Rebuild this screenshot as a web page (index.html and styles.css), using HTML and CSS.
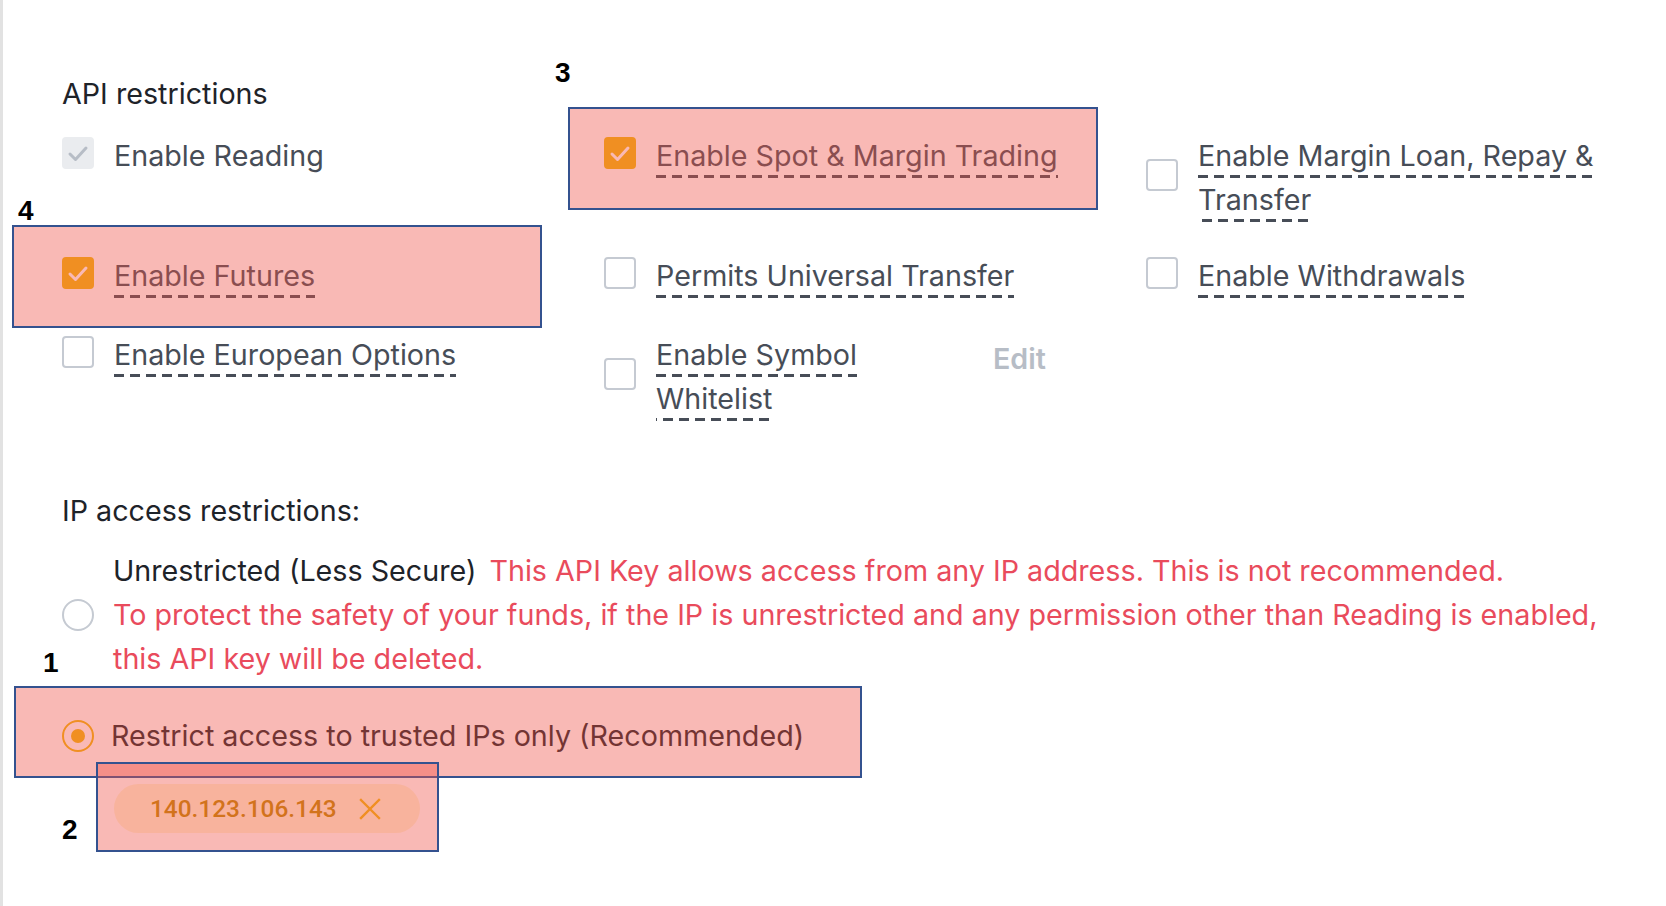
FILE: index.html
```html
<!DOCTYPE html>
<html lang="en">
<head>
<meta charset="utf-8">
<title>API restrictions</title>
<link rel="stylesheet" href="styles.css">
</head>
<body>
<div class="page">
  <section class="api">
    <h2 class="title">API restrictions</h2>
    <div class="grid">
      <div class="item">
        <span class="cb cb-disabled"><svg viewBox="0 0 28 28"><polyline points="6,15 11.5,20.5 22,9" fill="none" stroke="#B7BDC6" stroke-width="3" stroke-linecap="round" stroke-linejoin="round"/></svg></span>
        <span class="label">Enable Reading</span>
      </div>
      <div class="item">
        <span class="cb cb-checked"><svg viewBox="0 0 28 28"><polyline points="6,15 11.5,20.5 22,9" fill="none" stroke="#FFFFFF" stroke-width="3" stroke-linecap="round" stroke-linejoin="round"/></svg></span>
        <span class="label"><span class="dash">Enable Spot &amp; Margin Trading</span></span>
      </div>
      <div class="item">
        <span class="cb"></span>
        <span class="label"><span class="dash">Enable Margin Loan, Repay &amp; Transfer</span></span>
      </div>
      <div class="item">
        <span class="cb cb-checked"><svg viewBox="0 0 28 28"><polyline points="6,15 11.5,20.5 22,9" fill="none" stroke="#FFFFFF" stroke-width="3" stroke-linecap="round" stroke-linejoin="round"/></svg></span>
        <span class="label"><span class="dash">Enable Futures</span></span>
      </div>
      <div class="item">
        <span class="cb"></span>
        <span class="label"><span class="dash">Permits Universal Transfer</span></span>
      </div>
      <div class="item">
        <span class="cb"></span>
        <span class="label"><span class="dash">Enable Withdrawals</span></span>
      </div>
      <div class="item item-low">
        <span class="cb"></span>
        <span class="label"><span class="dash">Enable European Options</span></span>
      </div>
      <div class="item item-low">
        <span class="cb"></span>
        <span class="label label-narrow"><span class="dash">Enable Symbol Whitelist</span></span>
        <span class="edit">Edit</span>
      </div>
    </div>
  </section>

  <section class="ip">
    <h2 class="title">IP access restrictions:</h2>
    <div class="option">
      <span class="radio"></span>
      <p class="opt-text">Unrestricted (Less Secure) <span class="warn">This API Key allows access from any IP address. This is not recommended.<br>To protect the safety of your funds, if the IP is unrestricted and any permission other than Reading is enabled,<br>this API key will be deleted.</span></p>
    </div>
    <div class="option option-on">
      <span class="radio radio-on"></span>
      <p class="opt-text">Restrict access to trusted IPs only (Recommended)</p>
    </div>
    <div class="pill">
      <span class="pill-text">140.123.106.143</span>
      <svg class="pill-x" viewBox="0 0 22 22"><path d="M2 2L20 20M20 2L2 20" stroke="#F0B90B" stroke-width="2.4" stroke-linecap="square"/></svg>
    </div>
  </section>

  <div class="mark mark-3"></div>
  <div class="mark mark-4"></div>
  <div class="mark mark-1"></div>
  <div class="mark mark-2"></div>
  <span class="num num-3">3</span>
  <span class="num num-4">4</span>
  <span class="num num-1">1</span>
  <span class="num num-2">2</span>
</div>
</body>
</html>
```

FILE: styles.css
```css
* { box-sizing: border-box; }

html, body {
  margin: 0;
  padding: 0;
  background: #ffffff;
}

body {
  font-family: Inter, "Noto Sans", sans-serif;
  font-size: 28.7px;
  line-height: 44px;
  color: #474D57;
}

.page {
  position: relative;
  min-height: 906px;
  border-left: 3px solid #E2E2E2;
  padding: 72px 46px 0 59px;
  overflow: hidden;
}

.title {
  margin: 0;
  font-size: 28.7px;
  font-weight: 400;
  line-height: 44px;
  color: #1E2329;
}

.api .title { margin-bottom: 18px; }

.grid {
  display: grid;
  grid-template-columns: repeat(3, 474px);
  column-gap: 68px;
  row-gap: 32px;
  align-items: start;
}

.item {
  display: flex;
  align-items: center;
  gap: 20px;
}

.item-low { margin-top: 3px; }

.cb {
  flex: none;
  width: 32px;
  height: 32px;
  margin-bottom: 6px;
  border: 2px solid #C5CAD2;
  border-radius: 4px;
  background: #ffffff;
  display: flex;
  align-items: center;
  justify-content: center;
}

.cb svg {
  width: 28px;
  height: 28px;
  display: block;
}

.cb-checked {
  background: #F0B90B;
  border-color: #F0B90B;
}

.cb-disabled {
  background: #EAECEF;
  border-color: #EAECEF;
}

.label { min-width: 0; }

.label-narrow {
  flex: none;
  width: 300px;
}

.dash {
  padding-bottom: 5px;
  background-image: repeating-linear-gradient(to right, #474D57 0 10px, transparent 10px 16px);
  background-size: 100% 3px;
  background-repeat: no-repeat;
  background-position: 0 100%;
}

.edit {
  align-self: flex-start;
  margin-top: 4px;
  margin-left: 17px;
  font-weight: 600;
  color: #B7BDC6;
}

.ip { margin-top: 68px; }

.ip .title { margin-bottom: 16px; }

.option {
  display: flex;
  align-items: center;
  gap: 19px;
}

.option-on {
  gap: 17px;
  margin-top: 33px;
}

.opt-text {
  margin: 0;
  color: #1E2329;
}

.warn {
  margin-left: 5px;
  color: #E94B5C;
}

.radio {
  flex: none;
  width: 32px;
  height: 32px;
  border: 2px solid #C5CAD2;
  border-radius: 50%;
  background: #ffffff;
  display: flex;
  align-items: center;
  justify-content: center;
}

.radio-on { border-color: #F0B90B; }

.radio-on::after {
  content: "";
  width: 14px;
  height: 14px;
  border-radius: 50%;
  background: #F0B90B;
}

.pill {
  display: inline-flex;
  align-items: center;
  gap: 22px;
  height: 49px;
  margin: 26px 0 0 52px;
  padding: 0 39px 0 36px;
  border-radius: 25px;
  background: #FEF6D8;
}

.pill-text {
  font-family: Roboto, "Liberation Sans", sans-serif;
  font-size: 24.4px;
  font-weight: 500;
  line-height: 49px;
  color: #BF8A00;
}

.pill-x {
  width: 22px;
  height: 22px;
  display: block;
}

.mark {
  position: absolute;
  border: 2px solid #34528F;
  background: rgba(240, 80, 70, 0.4);
  pointer-events: none;
}

.mark-3 { left: 565px; top: 107px; width: 530px; height: 103px; }
.mark-4 { left: 9px; top: 225px; width: 530px; height: 103px; }
.mark-1 { left: 11px; top: 686px; width: 848px; height: 92px; }
.mark-2 { left: 93px; top: 762px; width: 343px; height: 90px; }

.num {
  position: absolute;
  font-family: "Liberation Sans", Arial, sans-serif;
  font-size: 28px;
  font-weight: 700;
  line-height: 28px;
  color: #000000;
}

.num-3 { left: 552px; top: 59px; }
.num-4 { left: 15px; top: 197px; }
.num-1 { left: 40px; top: 649px; }
.num-2 { left: 59px; top: 816px; }
```
